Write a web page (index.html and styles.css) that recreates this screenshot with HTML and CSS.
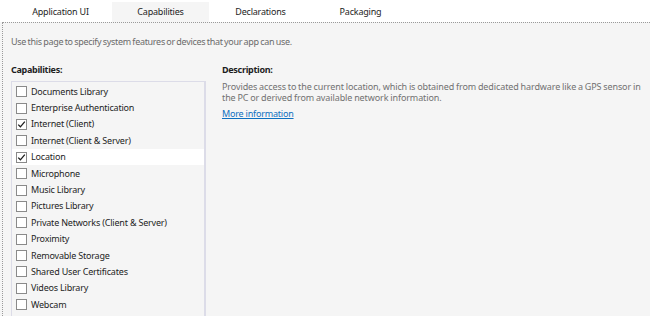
FILE: index.html
```html
<!DOCTYPE html>
<html>
<head>
<meta charset="utf-8">
<link rel="stylesheet" href="styles.css">
</head>
<body>
<div class="tabs">
  <div class="tab">Application UI</div>
  <div class="tab active">Capabilities</div>
  <div class="tab">Declarations</div>
  <div class="tab">Packaging</div>
</div>
<div class="page">
  <p class="intro">Use this page to specify system features or devices that your app can use.</p>
  <div class="cols">
    <div class="left">
      <div class="heading">Capabilities:</div>
      <div class="list">
        <div class="row"><span class="box"></span>Documents Library</div>
        <div class="row"><span class="box"></span>Enterprise Authentication</div>
        <div class="row"><span class="box"><svg viewBox="0 0 9 9" width="9" height="9"><path d="M1.2 4.6 L3.4 6.8 L7.8 1.6" fill="none" stroke="#1e1e1e" stroke-width="1.3"/></svg></span>Internet (Client)</div>
        <div class="row"><span class="box"></span>Internet (Client &amp; Server)</div>
        <div class="row selected"><span class="box"><svg viewBox="0 0 9 9" width="9" height="9"><path d="M1.2 4.6 L3.4 6.8 L7.8 1.6" fill="none" stroke="#1e1e1e" stroke-width="1.3"/></svg></span>Location</div>
        <div class="row"><span class="box"></span>Microphone</div>
        <div class="row"><span class="box"></span>Music Library</div>
        <div class="row"><span class="box"></span>Pictures Library</div>
        <div class="row"><span class="box"></span>Private Networks (Client &amp; Server)</div>
        <div class="row"><span class="box"></span>Proximity</div>
        <div class="row"><span class="box"></span>Removable Storage</div>
        <div class="row"><span class="box"></span>Shared User Certificates</div>
        <div class="row"><span class="box"></span>Videos Library</div>
        <div class="row"><span class="box"></span>Webcam</div>
      </div>
    </div>
    <div class="right">
      <div class="heading">Description:</div>
      <p class="desc">Provides access to the current location, which is obtained from dedicated hardware like a GPS sensor in the PC or derived from available network information.</p>
      <a class="more" href="#">More information</a>
    </div>
  </div>
</div>
</body>
</html>
```
FILE: styles.css
```css
html, body {
  margin: 0;
  padding: 0;
}
body {
  width: 650px;
  height: 316px;
  overflow: hidden;
  background: #f5f5f5;
  font-family: "Noto Sans", "Open Sans", sans-serif;
  font-size: 9px;
  letter-spacing: -0.2px;
  color: #1e1e1e;
}
.tabs {
  display: flex;
  gap: 3px;
  padding-left: 12px;
  padding-top: 2px;
  height: 20px;
  background: #ffffff;
}
.tab {
  width: 97px;
  height: 20px;
  line-height: 20px;
  text-align: center;
  color: #1e1e1e;
}
.tab.active {
  background: #f5f5f5;
}
.page {
  margin-left: 2px;
  border-left: 1px dotted #9a9a9a;
  border-top: 1px dotted #9a9a9a;
  padding-left: 8px;
  height: 293px;
  overflow: hidden;
}
.intro {
  margin: 0;
  padding-top: 13px;
  line-height: 12px;
  color: #6b6b6b;
  letter-spacing: -0.3px;
  word-spacing: -0.6px;
}
.cols {
  display: flex;
  gap: 16px;
  margin-top: 16px;
}
.left {
  width: 195px;
  flex: none;
}
.heading {
  font-weight: bold;
  line-height: 12px;
  color: #1e1e1e;
  letter-spacing: -0.3px;
}
.list {
  margin-top: 5px;
  border: 1px solid #dcdce8;
  border-right-width: 2px;
  padding-top: 1.5px;
  height: 240px;
}
.row {
  display: flex;
  align-items: center;
  height: 16.4px;
  line-height: 16px;
}
.row.selected {
  background: #ffffff;
}
.box {
  width: 9px;
  height: 9px;
  border: 1px solid #8a8a8a;
  background: #ffffff;
  margin-left: 4px;
  margin-right: 4px;
  flex: none;
  display: flex;
}
.right {
  flex: 1;
  padding-right: 2px;
}
.desc {
  margin: 5px 0 0 0;
  line-height: 11px;
  color: #717171;
  letter-spacing: -0.1px;
  word-spacing: -0.4px;
}
.more {
  display: block;
  margin-top: 4.5px;
  line-height: 12px;
  color: #0e70c0;
  text-decoration: underline;
}
```
